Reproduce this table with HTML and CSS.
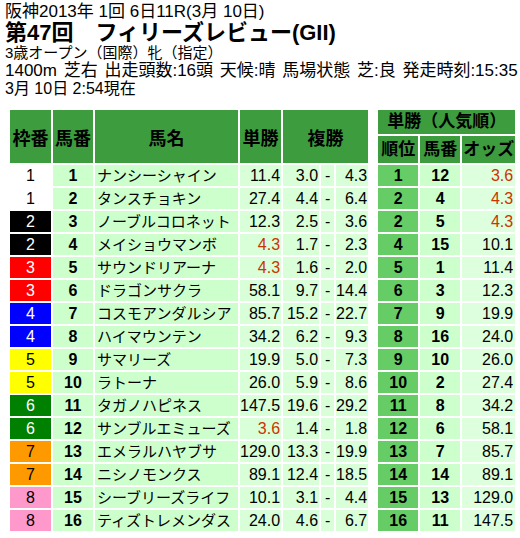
FILE: index.html
```html
<!DOCTYPE html>
<html>
	<head>
		<meta charset="utf-8">
		<title>フィリーズレビュー オッズ</title>
		<link rel="stylesheet" href="styles.css">
	</head>
	<body>
		<div class="info">
			<p class="line wide first">阪神2013年 1回 6日11R(3月 10日)</p>
			<h1 class="title">第47回　フィリーズレビュー(GII)</h1>
			<p class="line small">3歳オープン（国際）牝（指定）</p>
			<p class="line wide spaced">1400m 芝右 出走頭数:16頭 天候:晴 馬場状態 芝:良 発走時刻:15:35</p>
			<p class="line">3月 10日 2:54現在</p>
		</div>

		<div class="tables">
			<!-- 出馬表 -->
			<table class="odds">
				<colgroup>
					<col style="width: 41px">
					<col style="width: 40px">
					<col style="width: 143px">
					<col style="width: 41px">
					<col style="width: 36px">
					<col style="width: 13px">
					<col style="width: 31px">
				</colgroup>
				<tr class="head">
					<th>枠番</th>
					<th>馬番</th>
					<th>馬名</th>
					<th>単勝</th>
					<th colspan="3">複勝</th>
				</tr>
				<tr><td class="waku waku1">1</td><td class="num">1</td><td class="name">ナンシーシャイン</td><td class="win">11.4</td><td class="lo">3.0</td><td class="dash">-</td><td class="hi">4.3</td></tr>
				<tr><td class="waku waku1">1</td><td class="num">2</td><td class="name">タンスチョキン</td><td class="win">27.4</td><td class="lo">4.4</td><td class="dash">-</td><td class="hi">6.4</td></tr>
				<tr><td class="waku waku2">2</td><td class="num">3</td><td class="name">ノーブルコロネット</td><td class="win">12.3</td><td class="lo">2.5</td><td class="dash">-</td><td class="hi">3.6</td></tr>
				<tr><td class="waku waku2">2</td><td class="num">4</td><td class="name">メイショウマンボ</td><td class="win fav">4.3</td><td class="lo">1.7</td><td class="dash">-</td><td class="hi">2.3</td></tr>
				<tr><td class="waku waku3">3</td><td class="num">5</td><td class="name">サウンドリアーナ</td><td class="win fav">4.3</td><td class="lo">1.6</td><td class="dash">-</td><td class="hi">2.0</td></tr>
				<tr><td class="waku waku3">3</td><td class="num">6</td><td class="name">ドラゴンサクラ</td><td class="win">58.1</td><td class="lo">9.7</td><td class="dash">-</td><td class="hi">14.4</td></tr>
				<tr><td class="waku waku4">4</td><td class="num">7</td><td class="name">コスモアンダルシア</td><td class="win">85.7</td><td class="lo">15.2</td><td class="dash">-</td><td class="hi">22.7</td></tr>
				<tr><td class="waku waku4">4</td><td class="num">8</td><td class="name">ハイマウンテン</td><td class="win">34.2</td><td class="lo">6.2</td><td class="dash">-</td><td class="hi">9.3</td></tr>
				<tr><td class="waku waku5">5</td><td class="num">9</td><td class="name">サマリーズ</td><td class="win">19.9</td><td class="lo">5.0</td><td class="dash">-</td><td class="hi">7.3</td></tr>
				<tr><td class="waku waku5">5</td><td class="num">10</td><td class="name">ラトーナ</td><td class="win">26.0</td><td class="lo">5.9</td><td class="dash">-</td><td class="hi">8.6</td></tr>
				<tr><td class="waku waku6">6</td><td class="num">11</td><td class="name">タガノハピネス</td><td class="win">147.5</td><td class="lo">19.6</td><td class="dash">-</td><td class="hi">29.2</td></tr>
				<tr><td class="waku waku6">6</td><td class="num">12</td><td class="name">サンブルエミューズ</td><td class="win fav">3.6</td><td class="lo">1.4</td><td class="dash">-</td><td class="hi">1.8</td></tr>
				<tr><td class="waku waku7">7</td><td class="num">13</td><td class="name">エメラルハヤブサ</td><td class="win">129.0</td><td class="lo">13.3</td><td class="dash">-</td><td class="hi">19.9</td></tr>
				<tr><td class="waku waku7">7</td><td class="num">14</td><td class="name">ニシノモンクス</td><td class="win">89.1</td><td class="lo">12.4</td><td class="dash">-</td><td class="hi">18.5</td></tr>
				<tr><td class="waku waku8">8</td><td class="num">15</td><td class="name">シーブリーズライフ</td><td class="win">10.1</td><td class="lo">3.1</td><td class="dash">-</td><td class="hi">4.4</td></tr>
				<tr><td class="waku waku8">8</td><td class="num">16</td><td class="name">ティズトレメンダス</td><td class="win">24.0</td><td class="lo">4.6</td><td class="dash">-</td><td class="hi">6.7</td></tr>
			</table>

			<!-- 単勝 人気順 -->
			<table class="rank">
				<colgroup>
					<col style="width: 40px">
					<col style="width: 40px">
					<col style="width: 53px">
				</colgroup>
				<tr class="cap"><th colspan="3">単勝（人気順）</th></tr>
				<tr class="sub"><th>順位</th><th>馬番</th><th>オッズ</th></tr>
				<tr><td class="pos">1</td><td class="num">12</td><td class="win fav">3.6</td></tr>
				<tr><td class="pos">2</td><td class="num">4</td><td class="win fav">4.3</td></tr>
				<tr><td class="pos">2</td><td class="num">5</td><td class="win fav">4.3</td></tr>
				<tr><td class="pos">4</td><td class="num">15</td><td class="win">10.1</td></tr>
				<tr><td class="pos">5</td><td class="num">1</td><td class="win">11.4</td></tr>
				<tr><td class="pos">6</td><td class="num">3</td><td class="win">12.3</td></tr>
				<tr><td class="pos">7</td><td class="num">9</td><td class="win">19.9</td></tr>
				<tr><td class="pos">8</td><td class="num">16</td><td class="win">24.0</td></tr>
				<tr><td class="pos">9</td><td class="num">10</td><td class="win">26.0</td></tr>
				<tr><td class="pos">10</td><td class="num">2</td><td class="win">27.4</td></tr>
				<tr><td class="pos">11</td><td class="num">8</td><td class="win">34.2</td></tr>
				<tr><td class="pos">12</td><td class="num">6</td><td class="win">58.1</td></tr>
				<tr><td class="pos">13</td><td class="num">7</td><td class="win">85.7</td></tr>
				<tr><td class="pos">14</td><td class="num">14</td><td class="win">89.1</td></tr>
				<tr><td class="pos">15</td><td class="num">13</td><td class="win">129.0</td></tr>
				<tr><td class="pos">16</td><td class="num">11</td><td class="win">147.5</td></tr>
			</table>
		</div>
	</body>
</html>
```

FILE: styles.css
```css
* {
	margin: 0;
	padding: 0;
}

body {
	background: #fff;
	color: #000;
	font-family: "Liberation Sans", "Noto Sans CJK JP", sans-serif;
}

/* ---------- レース情報 ---------- */
.info {
	padding: 2px 0 0 5px;
}

.line {
	font-size: 16px;
	line-height: 18px;
	white-space: nowrap;
}

.line.wide {
	font-size: 17px;
}

.line.first {
	line-height: 20px;
}

.line.spaced {
	word-spacing: 2px;
}

.line.small {
	font-size: 15px;
}

.title {
	font-size: 22px;
	line-height: 22px;
	font-weight: bold;
}

/* ---------- 表 ---------- */
.tables {
	display: flex;
	align-items: flex-start;
	gap: 6px;
	margin: 10px 0 0 8px;
}

table {
	border-collapse: separate;
	border-spacing: 2px;
	table-layout: fixed;
	background: #fff;
}

th {
	background: #3d9c3d;
	font-weight: bold;
	text-align: center;
	white-space: nowrap;
}

td {
	height: 21px;
	padding: 0;
	font-size: 16px;
	line-height: 21px;
	white-space: nowrap;
	background: #ccffcc;
}

.odds .head th {
	height: 53px;
	font-size: 18px;
}

.rank .cap th {
	height: 24px;
	font-size: 17px;
	line-height: 24px;
}

.rank .sub th {
	height: 27px;
	font-size: 17px;
	line-height: 27px;
}

.waku {
	text-align: center;
}

.num {
	text-align: center;
	font-weight: bold;
}

.name {
	padding-left: 2px;
	font-size: 15px;
}

.win,
.lo,
.hi {
	text-align: right;
	padding-right: 1px;
	background: #d9ffd9;
}

.dash {
	text-align: center;
	background: #d9ffd9;
}

.fav {
	color: #cc3300;
}

.pos {
	text-align: center;
	font-weight: bold;
	background: #66cc66;
}

.rank .num {
	background: #ccffcc;
}

.rank .win {
	padding-right: 2px;
	background: #ddffdd;
}

/* 枠の色 */
.waku1 { background: #ffffff; color: #000; }
.waku2 { background: #000000; color: #fff; }
.waku3 { background: #ff0000; color: #fff; }
.waku4 { background: #0000ff; color: #fff; }
.waku5 { background: #ffff00; color: #000; }
.waku6 { background: #008000; color: #fff; }
.waku7 { background: #ff9900; color: #000; }
.waku8 { background: #ff99cc; color: #000; }
```
